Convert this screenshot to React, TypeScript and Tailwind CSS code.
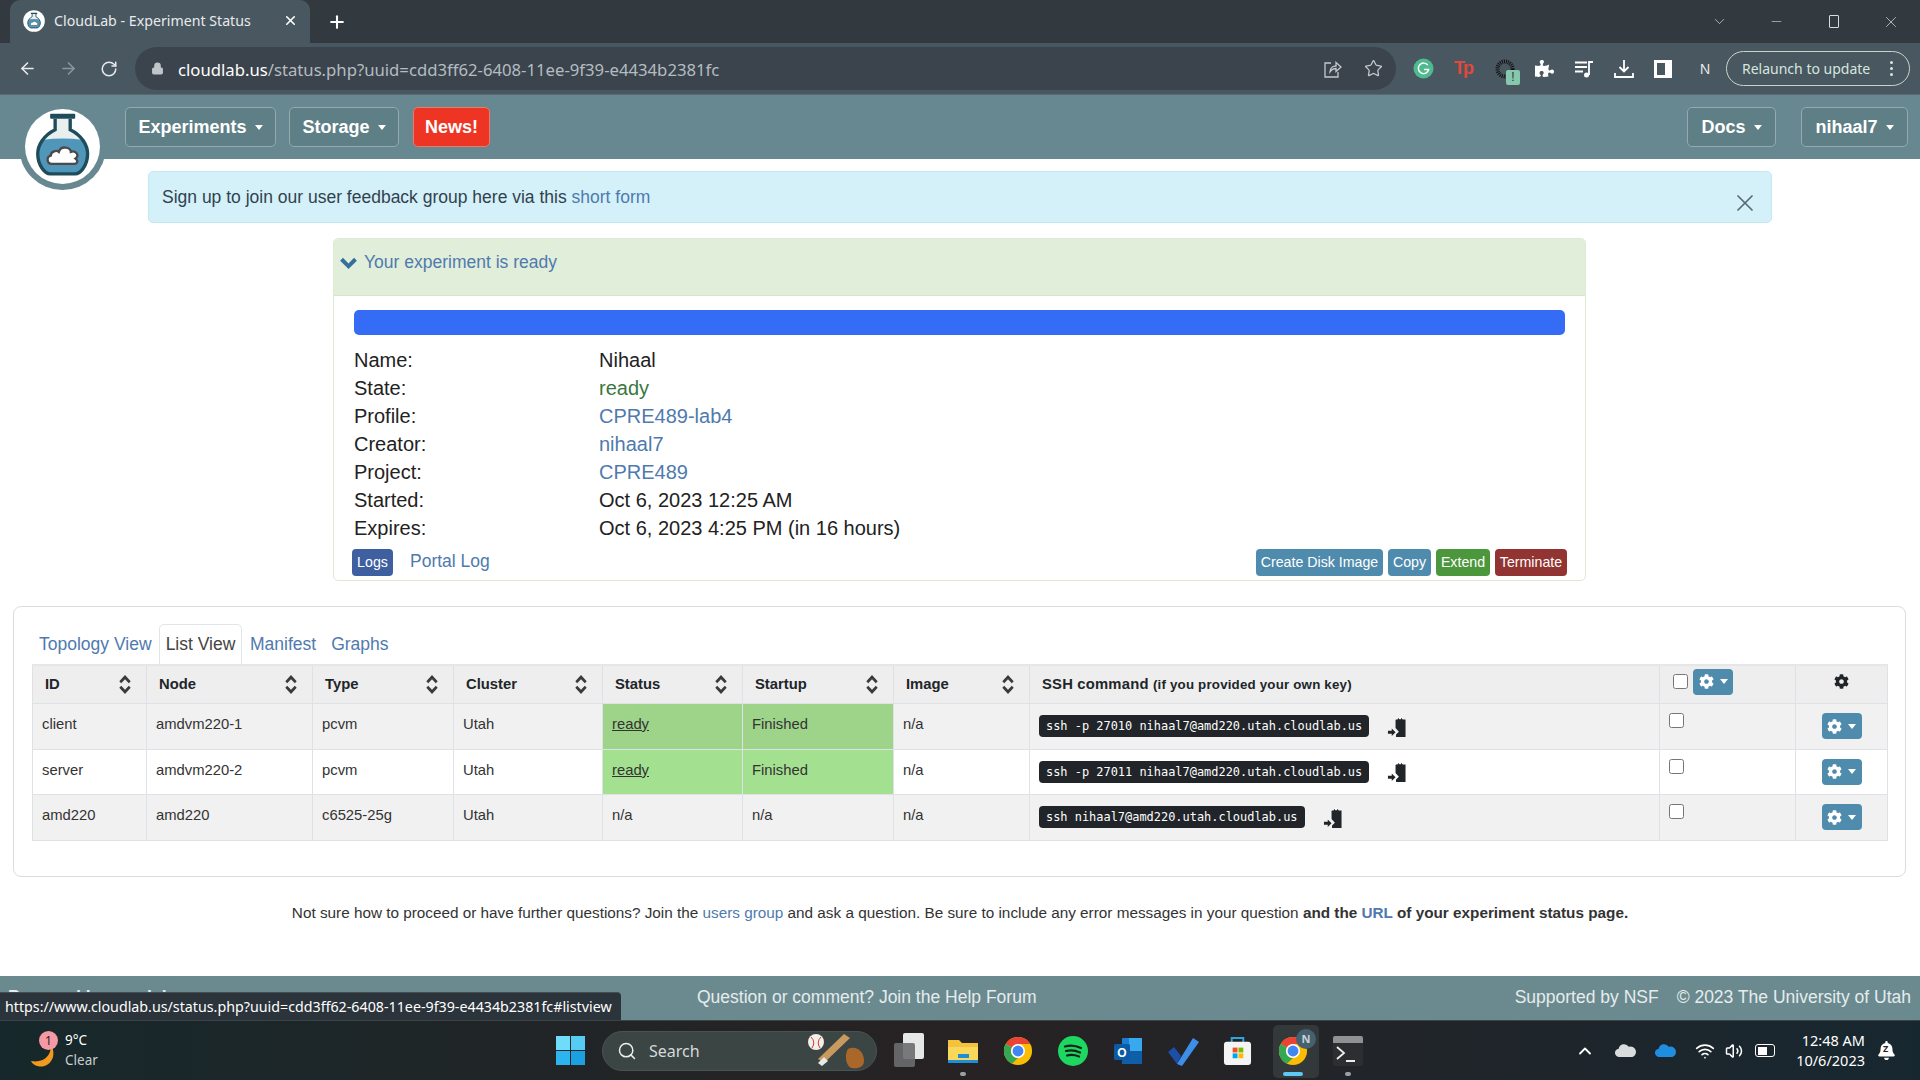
import React from "react";
import { ArrowLeft, ArrowRight, RotateCw, Lock, Star, Plus, X, ChevronDown, Minus, Search, ChevronUp, Wifi, Volume2 } from "lucide-react";
import { FaCog, FaPuzzlePiece, FaBell } from "react-icons/fa";

function Flask() {
  return (
    <>
      <path d="M165 85V118C130 135 113 165 113 190C113 225 135 250 150 250H225C240 250 262 225 262 190C262 165 245 135 210 118V85Z" fill="#e8efee" />
      <path d="M128 148Q187 140 247 148C258 165 262 178 262 190C262 225 240 250 225 250H150C135 250 113 225 113 190C113 178 117 165 128 148Z" fill="#5096b9" />
      <path d="M165 85V118C130 135 113 165 113 190C113 225 135 250 150 250H225C240 250 262 225 262 190C262 165 245 135 210 118V85" fill="none" stroke="#1f4c5a" strokeWidth="10" />
      <rect x="150" y="70" width="75" height="15" rx="3" fill="#1f4c5a" />
      <path d="M155 220C140 220 138 198 152 195C152 182 170 178 176 184C182 164 212 170 212 184C228 178 238 196 226 204C236 212 230 220 222 220Z" fill="#fff" stroke="#4a4a4a" strokeWidth="7" />
    </>
  );
}

function Logo() {
  return (
    <svg viewBox="57 38 260 260" className="absolute left-[19px] top-[8px] w-[87px] h-[87px]">
      <circle cx="187" cy="168" r="130" fill="#678890" />
      <circle cx="187" cy="168" r="112" fill="#fff" />
      <Flask />
    </svg>
  );
}

function Favicon() {
  return (
    <svg viewBox="57 38 260 260" className="w-[22px] h-[22px] shrink-0">
      <circle cx="187" cy="168" r="128" fill="#fff" />
      <Flask />
    </svg>
  );
}

function Caret() {
  return <span className="inline-block w-0 h-0 border-x-[4px] border-x-transparent border-t-[5px] border-t-current" />;
}

function NavBtn({ label, w, cls = "" }: { label: string; w: string; cls?: string }) {
  return (
    <div className={`h-[40px] ${w} ${cls} flex items-center justify-center gap-[8px] rounded-[5px] border border-[#93aab0] bg-[#5f7f86] text-white font-bold text-[18px]`}>
      {label}
      <Caret />
    </div>
  );
}

function Chrome({ size = 30 }: { size?: number }) {
  return (
    <svg viewBox="0 0 32 32" width={size} height={size}>
      <circle cx="16" cy="16" r="15" fill="#fbbc04" />
      <path d="M16 1A15 15 0 0 1 29 8.500H16A7.500 7.500 0 0 0 9.500 12.250L3 8.500A15 15 0 0 1 16 1Z" fill="#ea4335" />
      <path d="M3 8.500L9.500 12.250 A7.500 7.500 0 0 0 16 23.500L9.500 29.500A15 15 0 0 1 3 8.500Z" fill="#34a853" />
      <circle cx="16" cy="16" r="7.500" fill="#fff" />
      <circle cx="16" cy="16" r="5.800" fill="#4285f4" />
    </svg>
  );
}

function TabBar() {
  return (
    <div className="h-[43px] bg-[#32393f] flex items-end shrink-0 text-white">
      <div className="ml-[10px] w-[300px] h-[43px] bg-[#495760] rounded-t-[10px] flex items-center pl-[13px] pr-[12px] pb-[2px] gap-[9px]">
        <Favicon />
        <span className="flex-1 text-[14.200px] text-[#e8eaed] whitespace-nowrap" style={{ fontFamily: "'Noto Sans', sans-serif" }}>CloudLab - Experiment Status</span>
        <X size={15} strokeWidth={2.5} />
      </div>
      <div className="ml-[17px] h-[43px] flex items-center"><Plus size={20} strokeWidth={2.5} /></div>
      <div className="flex-1" />
      <div className="h-[43px] flex items-center text-[#d8dcdf]">
        <ChevronDown size={17} strokeWidth={1} />
        <div className="w-[57px] flex justify-center ml-[20px]"><Minus size={15} strokeWidth={1} /></div>
        <div className="w-[57px] flex justify-center"><div className="w-[10px] h-[13px] border border-[#d8dcdf] rounded-[1px]" /></div>
        <div className="w-[58px] flex justify-center"><X size={18} strokeWidth={1} /></div>
      </div>
    </div>
  );
}

function Toolbar() {
  return (
    <div className="h-[52px] bg-[#495760] flex items-center shrink-0 border-b border-[#5a6a72] text-[#e8eaed]">
      <div className="w-[135px] flex items-center pl-[18px] gap-[22px]">
        <ArrowLeft size={19} strokeWidth={2} />
        <ArrowRight size={19} strokeWidth={2} className="text-[#8a969d]" />
        <RotateCw size={18} strokeWidth={2} />
      </div>
      <div className="w-[1261px] h-[43px] rounded-full bg-[#3b444c] flex items-center pl-[16px] pr-[13px]">
        <Lock size={13} fill="#c0c5c9" className="text-[#c0c5c9]" />
        <span className="ml-[14px] mt-[2px] text-[16.700px] whitespace-nowrap" style={{ fontFamily: "'Noto Sans', sans-serif" }}>
          <span className="text-white">cloudlab.us</span>
          <span className="text-[#b4bcc2]">/status.php?uuid=cdd3ff62-6408-11ee-9f39-e4434b2381fc</span>
        </span>
        <div className="flex-1" />
        <svg viewBox="0 0 20 20" className="w-[20px] h-[20px] mr-[21px]" fill="none" stroke="#c4c9cd" strokeWidth="1.300">
          <path d="M8 4H2V18H15V13" />
          <path d="M7 13C7 9 10 7 13 7V3.500L18 8L13 12.500V9.500C10.500 9.500 8.500 10.500 7 13Z" />
        </svg>
        <Star size={19} strokeWidth={1.600} className="text-[#c4c9cd]" />
      </div>
      <div className="w-[17px]" />
      <svg viewBox="0 0 22 22" className="w-[21px] h-[21px]">
        <circle cx="11" cy="11" r="10.500" fill="#4fb98f" />
        <path d="M15.500 7.500A5.500 5.500 0 1 0 16.500 12H11.500" fill="none" stroke="#fff" strokeWidth="1.500" />
      </svg>
      <div className="w-[20px]" />
      <div className="w-[20px] h-[24px] text-[#e0493c] font-bold text-[18px] leading-[22px] tracking-[-2px]" style={{ fontFamily: "'Liberation Sans', sans-serif" }}>Tp</div>
      <div className="w-[21px]" />
      <div className="relative w-[20px] h-[20px]">
        <svg viewBox="0 0 20 20" className="w-[20px] h-[20px]">
          <circle cx="10" cy="10" r="7.500" fill="none" stroke="#111" strokeWidth="4" strokeDasharray="1 1" />
        </svg>
        <div className="absolute left-[11px] top-[11px] w-[14px] h-[15px] rounded-[2px] bg-[#86c8ad] text-[#26332f] text-[12px] leading-[15px] text-center">!</div>
      </div>
      <div className="w-[20px]" />
      <FaPuzzlePiece size={19} className="text-white" />
      <div className="w-[20px]" />
      <svg viewBox="0 0 20 20" className="w-[20px] h-[20px]" fill="none" stroke="#fff" strokeWidth="1.800">
        <path d="M1 3.500H13M1 8H13M1 12.500H9" />
        <path d="M15 16V3H19" />
        <circle cx="12.500" cy="16" r="2.500" fill="#fff" stroke="none" />
      </svg>
      <div className="w-[20px]" />
      <svg viewBox="0 0 20 20" className="w-[20px] h-[20px]" fill="none" stroke="#fff" strokeWidth="1.800">
        <path d="M10 1V12M5.500 8L10 12.500L14.500 8" />
        <path d="M1 14V18H19V14" />
      </svg>
      <div className="w-[20px]" />
      <div className="w-[18px] h-[18px] border-[3px] border-white border-r-[7px]" />
      <div className="w-[23px]" />
      <div className="w-[20px] text-[14px] text-center" style={{ fontFamily: "'Noto Sans', sans-serif" }}>N</div>
      <div className="w-[11px]" />
      <div className="w-[184px] h-[35px] rounded-full border border-[#c8d6c8] flex items-center pl-[15px] pr-[16px] justify-between">
        <span className="text-[14px] text-[#d5e6df] whitespace-nowrap" style={{ fontFamily: "'Noto Sans', sans-serif" }}>Relaunch to update</span>
        <span className="flex flex-col gap-[3px]">
          <span className="w-[3px] h-[3px] rounded-full bg-[#d5e6df]" />
          <span className="w-[3px] h-[3px] rounded-full bg-[#d5e6df]" />
          <span className="w-[3px] h-[3px] rounded-full bg-[#d5e6df]" />
        </span>
      </div>
    </div>
  );
}

function Nav() {
  return (
    <div className="relative h-[64px] bg-[#678890] flex items-center shrink-0 z-10">
      <Logo />
      <NavBtn label="Experiments" w="w-[151px]" cls="ml-[125px]" />
      <NavBtn label="Storage" w="w-[110px]" cls="ml-[13px]" />
      <div className="ml-[14px] w-[77px] h-[40px] rounded-[5px] border border-[#e87a6e] bg-[#ee3524] text-white font-bold text-[18px] flex items-center justify-center">News!</div>
      <div className="flex-1" />
      <NavBtn label="Docs" w="w-[89px]" />
      <NavBtn label="nihaal7" w="w-[107px]" cls="ml-[25px] mr-[12px]" />
    </div>
  );
}

const info: [string, string, string][] = [
  ["Name:", "Nihaal", "text-[#222]"],
  ["State:", "ready", "text-[#3c763d]"],
  ["Profile:", "CPRE489-lab4", "text-[#4f7aae]"],
  ["Creator:", "nihaal7", "text-[#4f7aae]"],
  ["Project:", "CPRE489", "text-[#4f7aae]"],
  ["Started:", "Oct 6, 2023 12:25 AM", "text-[#222]"],
  ["Expires:", "Oct 6, 2023 4:25 PM (in 16 hours)", "text-[#222]"],
];

function Panel() {
  return (
    <div className="mt-[15px] ml-[333px] w-[1253px] h-[343px] border border-[#dfe9d3] rounded-[5px] flex flex-col shrink-0 overflow-hidden">
      <div className="h-[57px] bg-[#e1eeda] border-b border-[#d6e6c9] flex items-center pl-[6px] pb-[10px] text-[#4f7aae] text-[17.500px] gap-[7px] shrink-0">
        <svg viewBox="0 0 18 14" className="w-[17px] h-[13px]" fill="#35709c"><path d="M0 5L3 2L9 8L15 2L18 5L9 14Z" /></svg>
        Your experiment is ready
      </div>
      <div className="mx-[20px] mt-[14px] h-[25px] rounded-[5px] bg-[#356cf5] shrink-0" />
      <div className="mx-[20px] mt-[11px] shrink-0">
        {info.map(([k, v, c]) => (
          <div key={k} className="flex h-[28px] items-center text-[20px] text-[#222]">
            <div className="w-[245px]">{k}</div>
            <div className={c}>{v}</div>
          </div>
        ))}
      </div>
      <div className="flex items-center mx-[18px] mt-[7px] text-[14.200px] text-white">
        <div className="w-[41px] h-[27px] rounded-[4px] bg-[#3e5fa0] flex items-center justify-center">Logs</div>
        <div className="ml-[17px] text-[17.500px] text-[#4f7aae] -mt-[2px]">Portal Log</div>
        <div className="flex-1" />
        <div className="w-[127px] h-[27px] rounded-[4px] bg-[#4f8bac] flex items-center justify-center">Create Disk Image</div>
        <div className="ml-[5px] w-[43px] h-[27px] rounded-[4px] bg-[#4f8bac] flex items-center justify-center">Copy</div>
        <div className="ml-[5px] w-[54px] h-[27px] rounded-[4px] bg-[#4c963c] flex items-center justify-center">Extend</div>
        <div className="ml-[5px] w-[72px] h-[27px] rounded-[4px] bg-[#913432] flex items-center justify-center">Terminate</div>
      </div>
    </div>
  );
}

function SortIcon() {
  return (
    <svg viewBox="0 0 12 20" className="w-[12px] h-[19px] shrink-0" fill="#3a3a3a">
      <path d="M6 0L12 6.500L10 8.800L6 4.500L2 8.800L0 6.500Z" />
      <path d="M6 20L12 13.500L10 11.200L6 15.500L2 11.200L0 13.500Z" />
    </svg>
  );
}

function SshIcon() {
  return (
    <svg viewBox="0 0 20 24" className="w-[19px] h-[23px] shrink-0" fill="#212529">
      <path d="M9 5C9.500 4.500 10 4.500 11 4.500A3 3 0 0 1 16.500 4.500H19.500V23H9.500V20.500L12.500 17.500L9 13.500Z" />
      <circle cx="13.700" cy="3.300" r="1.200" fill="#fff" />
      <path d="M1 16.500H5V14L9 18L5 22V19.500H1Z" />
    </svg>
  );
}

function GearBtn() {
  return (
    <div className="w-[40px] h-[26px] rounded-[4px] bg-[#4f8bac] flex items-center justify-center gap-[6px] text-white">
      <FaCog size={15} />
      <Caret />
    </div>
  );
}

type Row = { id: string; node: string; type: string; status: string; startup: string; ssh: string; bg: string; green: string; h: string };
const rows: Row[] = [
  { id: "client", node: "amdvm220-1", type: "pcvm", status: "ready", startup: "Finished", ssh: "ssh -p 27010 nihaal7@amd220.utah.cloudlab.us", bg: "bg-[#f1f1f2]", green: "bg-[#9dd48a]", h: "h-[46px]" },
  { id: "server", node: "amdvm220-2", type: "pcvm", status: "ready", startup: "Finished", ssh: "ssh -p 27011 nihaal7@amd220.utah.cloudlab.us", bg: "bg-white", green: "bg-[#a3e190]", h: "h-[45px]" },
  { id: "amd220", node: "amd220", type: "c6525-25g", status: "n/a", startup: "n/a", ssh: "ssh nihaal7@amd220.utah.cloudlab.us", bg: "bg-[#f1f1f2]", green: "", h: "h-[46px]" },
];

const th = "border border-[#dee2e6] border-t-0 px-[12px] font-bold text-left text-[#212529]";
const td = "border border-[#dee2e6] px-[9px] align-top pt-[9px] text-[#333]";

function Table() {
  const heads = ["ID", "Node", "Type", "Cluster", "Status", "Startup", "Image"];
  return (
    <table className="table-fixed border-collapse w-[1855px] text-[14.800px] border-t-[2px] border-[#e4e6e8]">
      <colgroup>
        <col className="w-[114px]" />
        <col className="w-[166px]" />
        <col className="w-[141px]" />
        <col className="w-[149px]" />
        <col className="w-[140px]" />
        <col className="w-[151px]" />
        <col className="w-[136px]" />
        <col className="w-[630px]" />
        <col className="w-[136px]" />
        <col className="w-[92px]" />
      </colgroup>
      <thead>
        <tr className="h-[38px] bg-[#eeeeee]">
          {heads.map((h) => (
            <th key={h} className={th}>
              <div className="flex items-center justify-between pr-[3px]">
                {h}
                <SortIcon />
              </div>
            </th>
          ))}
          <th className={th + " tracking-[0.2px]"}>
            SSH command <span className="text-[13.300px]">(if you provided your own key)</span>
          </th>
          <th className={th}>
            <div className="flex items-center pl-[1px] gap-[5px] mb-[5px]">
              <input type="checkbox" readOnly className="w-[15px] h-[15px]" />
              <GearBtn />
            </div>
          </th>
          <th className={th}>
            <div className="flex justify-center mb-[5px]"><FaCog size={15} className="text-[#212529]" /></div>
          </th>
        </tr>
      </thead>
      <tbody>
        {rows.map((r) => (
          <tr key={r.id} className={`${r.h} ${r.bg}`}>
            <td className={td}>{r.id}</td>
            <td className={td + " text-[#4f7aae]"}>{r.node}</td>
            <td className={td + " text-[#4f7aae]"}>{r.type}</td>
            <td className={td}>Utah</td>
            <td className={`${td} ${r.green} ${r.green ? "underline" : ""}`}>{r.status}</td>
            <td className={`${td} ${r.green}`}>{r.startup}</td>
            <td className={td}>n/a</td>
            <td className="border border-[#dee2e6] px-[9px] align-middle">
              <div className="flex items-center gap-[18px]">
                <code className="h-[22px] px-[7px] rounded-[4px] bg-[#212529] text-white text-[11.950px] leading-[22px] whitespace-nowrap" style={{ fontFamily: "'DejaVu Sans Mono', monospace" }}>{r.ssh}</code>
                <SshIcon />
              </div>
            </td>
            <td className="border border-[#dee2e6] px-[9px] align-top pt-[9px]">
              <input type="checkbox" readOnly className="block w-[15px] h-[15px]" />
            </td>
            <td className="border border-[#dee2e6] align-middle">
              <div className="flex justify-center"><GearBtn /></div>
            </td>
          </tr>
        ))}
      </tbody>
    </table>
  );
}

function ListBox() {
  return (
    <div className="mt-[25px] mx-[13px] w-[1893px] h-[271px] border border-[#dcdcdc] rounded-[8px] px-[18px] pt-[17px] shrink-0">
      <div className="flex items-end h-[40px] text-[17.500px] text-[#4f7aae]">
        <div className="pl-[7px] w-[127px] pb-[7px]">Topology View</div>
        <div className="w-[83px] h-[40px] border border-b-0 border-[#e2e5e8] rounded-t-[5px] bg-white flex items-center justify-center text-[#444]">List View</div>
        <div className="ml-[8px] pb-[7px]">Manifest</div>
        <div className="ml-[15px] pb-[7px]">Graphs</div>
      </div>
      <Table />
    </div>
  );
}

function Main() {
  return (
    <div className="flex-1 flex flex-col bg-white overflow-hidden min-h-0">
      <div className="mt-[12px] ml-[148px] w-[1624px] h-[52px] bg-[#d4f1f9] border border-[#c2e9f3] rounded-[5px] flex items-center pl-[13px] pr-[12px] text-[17.500px] text-[#31424f] shrink-0">
        <span>Sign up to join our user feedback group here via this <span className="text-[#4f7aae]">short form</span></span>
        <div className="flex-1" />
        <X size={28} strokeWidth={1.500} className="text-[#5b6b75] mt-[12px]" />
      </div>
      <Panel />
      <ListBox />
      <div className="mt-[27px] text-center text-[15.300px] text-[#333] leading-[17px]">
        Not sure how to proceed or have further questions? Join the <span className="text-[#4f7aae]">users group</span> and ask a question. Be sure to include any error messages in your question <b>and the <span className="text-[#4f7aae]">URL</span> of your experiment status page.</b>
      </div>
    </div>
  );
}

function Footer() {
  return (
    <div className="h-[44px] bg-[#6a8a90] flex items-center text-[17.500px] text-[#e6ecec] shrink-0 whitespace-nowrap pb-[1px]">
      <div className="ml-[8px] w-[689px] font-bold">Powered by emulab</div>
      <div>Question or comment? Join the Help Forum</div>
      <div className="flex-1" />
      <div>Supported by NSF</div>
      <div className="ml-[18px] mr-[9px]">© 2023 The University of Utah</div>
    </div>
  );
}

function Win() {
  return (
    <div className="grid grid-cols-2 gap-[1px] w-[29px] h-[29px] shrink-0">
      <div className="bg-[#6fdcf9]" /><div className="bg-[#56ccf5]" /><div className="bg-[#2bb4ee]" /><div className="bg-[#1ba1e2]" />
    </div>
  );
}

function Slot({ children, dot }: { children: React.ReactNode; dot?: string }) {
  return (
    <div className="relative w-[55px] h-[60px] flex items-center justify-center shrink-0">
      {children}
      {dot && <div className={`absolute bottom-[5px] left-1/2 -translate-x-1/2 h-[4px] rounded-full ${dot}`} />}
    </div>
  );
}

function Taskbar() {
  return (
    <div className="h-[60px] bg-gradient-to-r from-[#16282b] via-[#272223] to-[#172730] border-t border-[#3c4347] flex items-center shrink-0 text-white" style={{ fontFamily: "'Noto Sans', sans-serif" }}>
      <div className="relative ml-[25px] w-[40px] h-[60px] flex items-center shrink-0">
        <svg viewBox="0 0 30 32" className="w-[30px] h-[32px] mt-[4px]">
          <path d="M26 8C26 20 18 26 6 24C9 31 24 33 28 20C29 15 28 11 26 8Z" fill="#f29a1f" />
        </svg>
        <div className="absolute left-[14px] top-[10px] w-[19px] h-[19px] rounded-full bg-[#f59aa5] text-[#222] text-[12px] leading-[19px] text-center">1</div>
      </div>
      <div className="w-[60px] text-[13.500px] leading-[20px] mb-[2px] shrink-0">
        <div>9°C</div>
        <div className="text-[#c9cdcf]">Clear</div>
      </div>
      <div className="ml-[431px]"><Win /></div>
      <div className="ml-[17px] w-[275px] h-[40px] rounded-full bg-[#3a4544] border border-[#4a5352] flex items-center pl-[14px] pr-[8px] shrink-0">
        <Search size={20} strokeWidth={1.800} className="text-[#eee]" />
        <span className="ml-[12px] text-[16px] text-[#d6d9d9]">Search</span>
        <div className="flex-1" />
        <svg viewBox="0 0 64 40" className="w-[64px] h-[40px]">
          <circle cx="12" cy="11" r="8" fill="#f3efe9" />
          <path d="M7 6Q12 11 8 17M17 6Q12 11 16 17" fill="none" stroke="#d0382e" strokeWidth="1" />
          <path d="M40 3L46 7L20 32L14 28Z" fill="#c99a5f" />
          <path d="M20 26L14 32L18 35L24 30Z" fill="#e8e8e8" />
          <path d="M44 18C52 14 60 20 60 30C60 36 54 38 48 37C42 36 40 24 44 18Z" fill="#a9682a" />
        </svg>
      </div>
      <div className="ml-[13px] w-[38px] flex justify-center shrink-0">
        <div className="relative w-[34px] h-[36px]">
          <div className="absolute right-[2px] top-0 w-[21px] h-[26px] rounded-[2px] bg-[#e6e8e8]" />
          <div className="absolute left-[2px] bottom-[2px] w-[21px] h-[24px] rounded-[2px] bg-[#6b6d6e]/90" />
        </div>
      </div>
      <div className="ml-[7px] shrink-0">
        <Slot dot="w-[6px] bg-[#9aa0a3]">
          <svg viewBox="0 0 32 28" className="w-[32px] h-[28px]">
            <path d="M1 3H12L15 6H31V26H1Z" fill="#f5c33b" />
            <path d="M1 10H31V26H1Z" fill="#fbd75a" />
            <rect x="11" y="17" width="11" height="4" fill="#1c8fd6" />
            <rect x="1" y="23" width="30" height="3" fill="#1c8fd6" />
          </svg>
        </Slot>
      </div>
      <Slot><Chrome /></Slot>
      <Slot>
        <svg viewBox="0 0 30 30" className="w-[30px] h-[30px]">
          <circle cx="15" cy="15" r="15" fill="#1ed760" />
          <path d="M7 10.500Q15 8 23 12M8 15Q15 13 22 16.500M9 19.500Q15 18 21 20.500" fill="none" stroke="#10251a" strokeWidth="2.200" strokeLinecap="round" />
        </svg>
      </Slot>
      <Slot>
        <svg viewBox="0 0 30 30" className="w-[30px] h-[30px]">
          <rect x="9" y="2" width="20" height="26" rx="1" fill="#1a7fd4" />
          <rect x="16" y="2" width="13" height="13" fill="#39a9ee" />
          <path d="M9 15H29V28H9Z" fill="#0f5fa8" />
          <rect x="1" y="8" width="16" height="16" rx="1.500" fill="#0a5aa5" />
          <text x="9" y="20.500" textAnchor="middle" fontSize="12" fontWeight="700" fill="#fff" fontFamily="Liberation Sans">O</text>
        </svg>
      </Slot>
      <Slot>
        <svg viewBox="0 0 32 30" className="w-[32px] h-[30px]">
          <path d="M1 16L7 11L14 20L10 28Z" fill="#1b4fa8" />
          <path d="M10 28L26 2L32 6L15 30Z" fill="#3d8ee8" />
        </svg>
      </Slot>
      <Slot>
        <svg viewBox="0 0 30 32" className="w-[29px] h-[31px]">
          <path d="M9 8V3H21V8" fill="none" stroke="#2aa6e0" strokeWidth="2" />
          <rect x="1" y="7" width="28" height="24" rx="3" fill="#f4f4f4" />
          <rect x="10" y="13" width="5" height="5" fill="#f25022" />
          <rect x="16" y="13" width="5" height="5" fill="#7fba00" />
          <rect x="10" y="19" width="5" height="5" fill="#00a4ef" />
          <rect x="16" y="19" width="5" height="5" fill="#ffb900" />
        </svg>
      </Slot>
      <div className="relative w-[55px] h-[60px] flex items-center justify-center shrink-0">
        <div className="absolute left-[8px] top-[4px] w-[46px] h-[53px] rounded-[5px] bg-[#33383b]" />
        <div className="relative"><Chrome /></div>
        <div className="absolute right-[4px] top-[8px] w-[20px] h-[20px] rounded-full bg-[#45606e] text-[11px] font-bold text-center leading-[20px] text-[#c8d2d6]">N</div>
        <div className="absolute bottom-[5px] left-1/2 -translate-x-1/2 w-[20px] h-[4px] rounded-full bg-[#5fc7f5]" />
      </div>
      <Slot dot="w-[6px] bg-[#9aa0a3]">
        <div className="w-[30px] h-[30px] rounded-[2px] bg-[#2c2f31] overflow-hidden">
          <div className="h-[7px] bg-[#8f9192]" />
          <svg viewBox="0 0 30 23" className="w-[30px] h-[23px]" fill="none" stroke="#eee" strokeWidth="1.800">
            <path d="M4 4L11 10L4 16" />
            <path d="M13 18H22" />
          </svg>
        </div>
      </Slot>
      <div className="flex-1" />
      <div className="flex items-center shrink-0">
        <ChevronUp size={20} strokeWidth={2.200} />
        <svg viewBox="0 0 24 16" className="ml-[20px] w-[22px] h-[15px]" fill="#d9dcdd"><path d="M5 15A4.500 4.500 0 0 1 4 6A6 6 0 0 1 15 4A5 5 0 0 1 19 15Z" /></svg>
        <svg viewBox="0 0 24 16" className="ml-[18px] w-[22px] h-[15px]" fill="#1f8de0"><path d="M5 15A4.500 4.500 0 0 1 4 6A6 6 0 0 1 15 4A5 5 0 0 1 19 15Z" /></svg>
        <Wifi size={20} className="ml-[18px]" />
        <Volume2 size={18} className="ml-[10px]" />
        <div className="ml-[12px] w-[20px] h-[13px] border-[1.500px] border-white rounded-[3px] p-[1.500px]"><div className="h-full w-[9px] bg-white" /></div>
      </div>
      <div className="ml-[5px] w-[85px] text-right text-[14.500px] leading-[20px] mb-[2px] shrink-0 whitespace-nowrap">
        <div>12:48 AM</div>
        <div>10/6/2023</div>
      </div>
      <div className="relative ml-[12px] mr-[24px] shrink-0">
        <FaBell size={19} />
        <span className="absolute left-[6px] top-[2px] text-[9px] leading-[11px] font-bold text-[#222]">Z</span>
      </div>
    </div>
  );
}

export default function App() {
  return (
    <div className="relative w-[1920px] h-[1080px] flex flex-col overflow-hidden bg-white" style={{ fontFamily: "'Liberation Sans', Arial, sans-serif" }}>
      <TabBar />
      <Toolbar />
      <Nav />
      <Main />
      <Footer />
      <Taskbar />
      <div className="absolute left-0 bottom-[60px] w-[621px] h-[28px] bg-[#2c343b] rounded-tr-[4px] border-t border-[#454c52] text-white text-[14.250px] leading-[27px] pl-[5px] whitespace-nowrap z-20" style={{ fontFamily: "'Noto Sans', sans-serif" }}>
        https://www.cloudlab.us/status.php?uuid=cdd3ff62-6408-11ee-9f39-e4434b2381fc#listview
      </div>
    </div>
  );
}
